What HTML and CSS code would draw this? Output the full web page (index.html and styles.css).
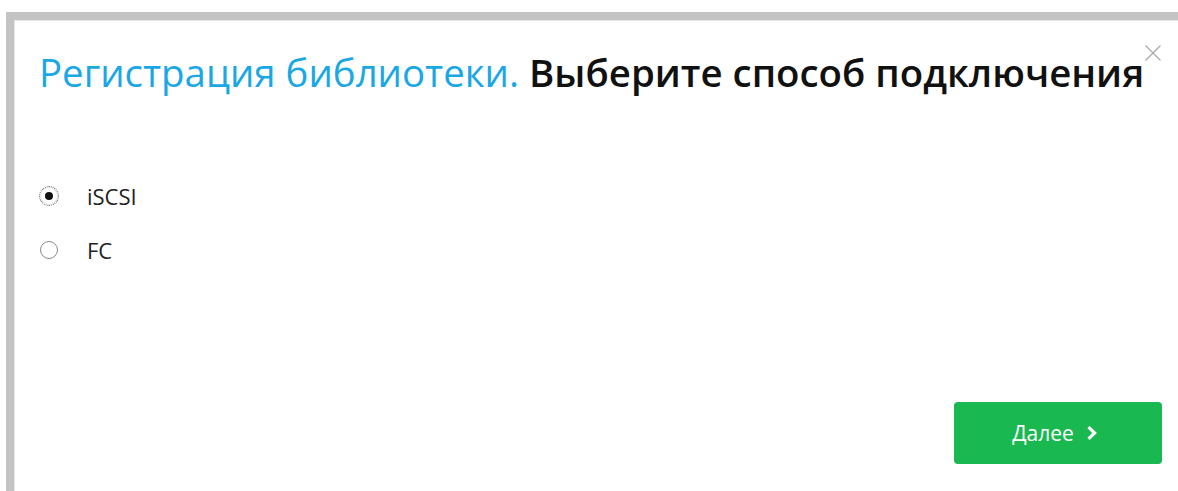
FILE: index.html
```html
<!DOCTYPE html>
<html lang="ru">
<head>
<meta charset="utf-8">
<title>Регистрация библиотеки</title>
<link rel="stylesheet" href="styles.css">
</head>
<body>
<div class="modal">
  <button class="modal-close" type="button" aria-label="Закрыть">
    <svg width="18" height="18" viewBox="0 0 18 18"><path d="M1.5 1.5 L16.5 16.5 M16.5 1.5 L1.5 16.5" stroke="#a8a8a8" stroke-width="1.3" fill="none"/></svg>
  </button>
  <h1 class="modal-title"><span class="accent">Регистрация библиотеки.</span> Выберите способ подключения</h1>
  <div class="options">
    <label class="option">
      <span class="radio checked focused"></span>
      <span class="option-label">iSCSI</span>
    </label>
    <label class="option">
      <span class="radio"></span>
      <span class="option-label">FC</span>
    </label>
  </div>
  <div class="modal-footer">
    <button class="btn-next" type="button">Далее
      <svg width="12" height="16" viewBox="0 0 12 16"><path d="M2.5 2.2 L8.6 8 L2.5 13.8" stroke="#fff" stroke-width="3.2" fill="none"/></svg>
    </button>
  </div>
</div>
</body>
</html>
```

FILE: styles.css
```css
html, body {
  margin: 0;
  padding: 0;
  background: #fff;
}

body {
  font-family: "Open Sans", "Noto Sans", sans-serif;
  color: #111;
  padding: 12px 0 0 6px;
  height: 491px;
  box-sizing: border-box;
  overflow: hidden;
}

.modal {
  position: relative;
  border-top: 8px solid #c4c4c4;
  border-left: 8px solid #c4c4c4;
  box-shadow: inset 1px 1px 0 #e6e6e6;
  height: 100%;
  box-sizing: border-box;
  display: flex;
  flex-direction: column;
  padding: 28px 16px 27px 25px;
}

.modal-close {
  position: absolute;
  top: 24px;
  right: 16px;
  padding: 0;
  border: 0;
  background: none;
  line-height: 0;
}

.modal-title {
  margin: 0;
  font-size: 38.4px;
  font-weight: 600;
  line-height: 48px;
  letter-spacing: 0;
  white-space: nowrap;
}

.modal-title .accent {
  color: #1aa7e6;
  font-weight: 400;
}

.options {
  margin-top: 85px;
  display: flex;
  flex-direction: column;
  gap: 24px;
}

.option {
  display: flex;
  align-items: center;
  gap: 29px;
  height: 30px;
  font-size: 22px;
  color: #222;
}

.radio {
  width: 18px;
  height: 18px;
  border-radius: 50%;
  border: 1.5px solid #8a8a8a;
  box-sizing: border-box;
  position: relative;
  margin-left: 1px;
}

.radio.checked {
  border-color: #e4e4e4;
}

.radio.checked::after {
  content: "";
  position: absolute;
  left: 3.5px;
  top: 3.5px;
  width: 8px;
  height: 8px;
  border-radius: 50%;
  background: #111;
}

.radio.focused {
  outline: 1px dotted #555;
  outline-offset: 0;
}

.modal-footer {
  margin-top: auto;
  display: flex;
  justify-content: flex-end;
}

.btn-next {
  width: 208px;
  height: 62px;
  border: 0;
  border-radius: 4px;
  background: #1ab851;
  color: #fff;
  font-family: "Open Sans", "Noto Sans", sans-serif;
  font-size: 21px;
  display: flex;
  align-items: center;
  justify-content: center;
  gap: 12px;
  padding: 0 6px 0 0;
}
```
